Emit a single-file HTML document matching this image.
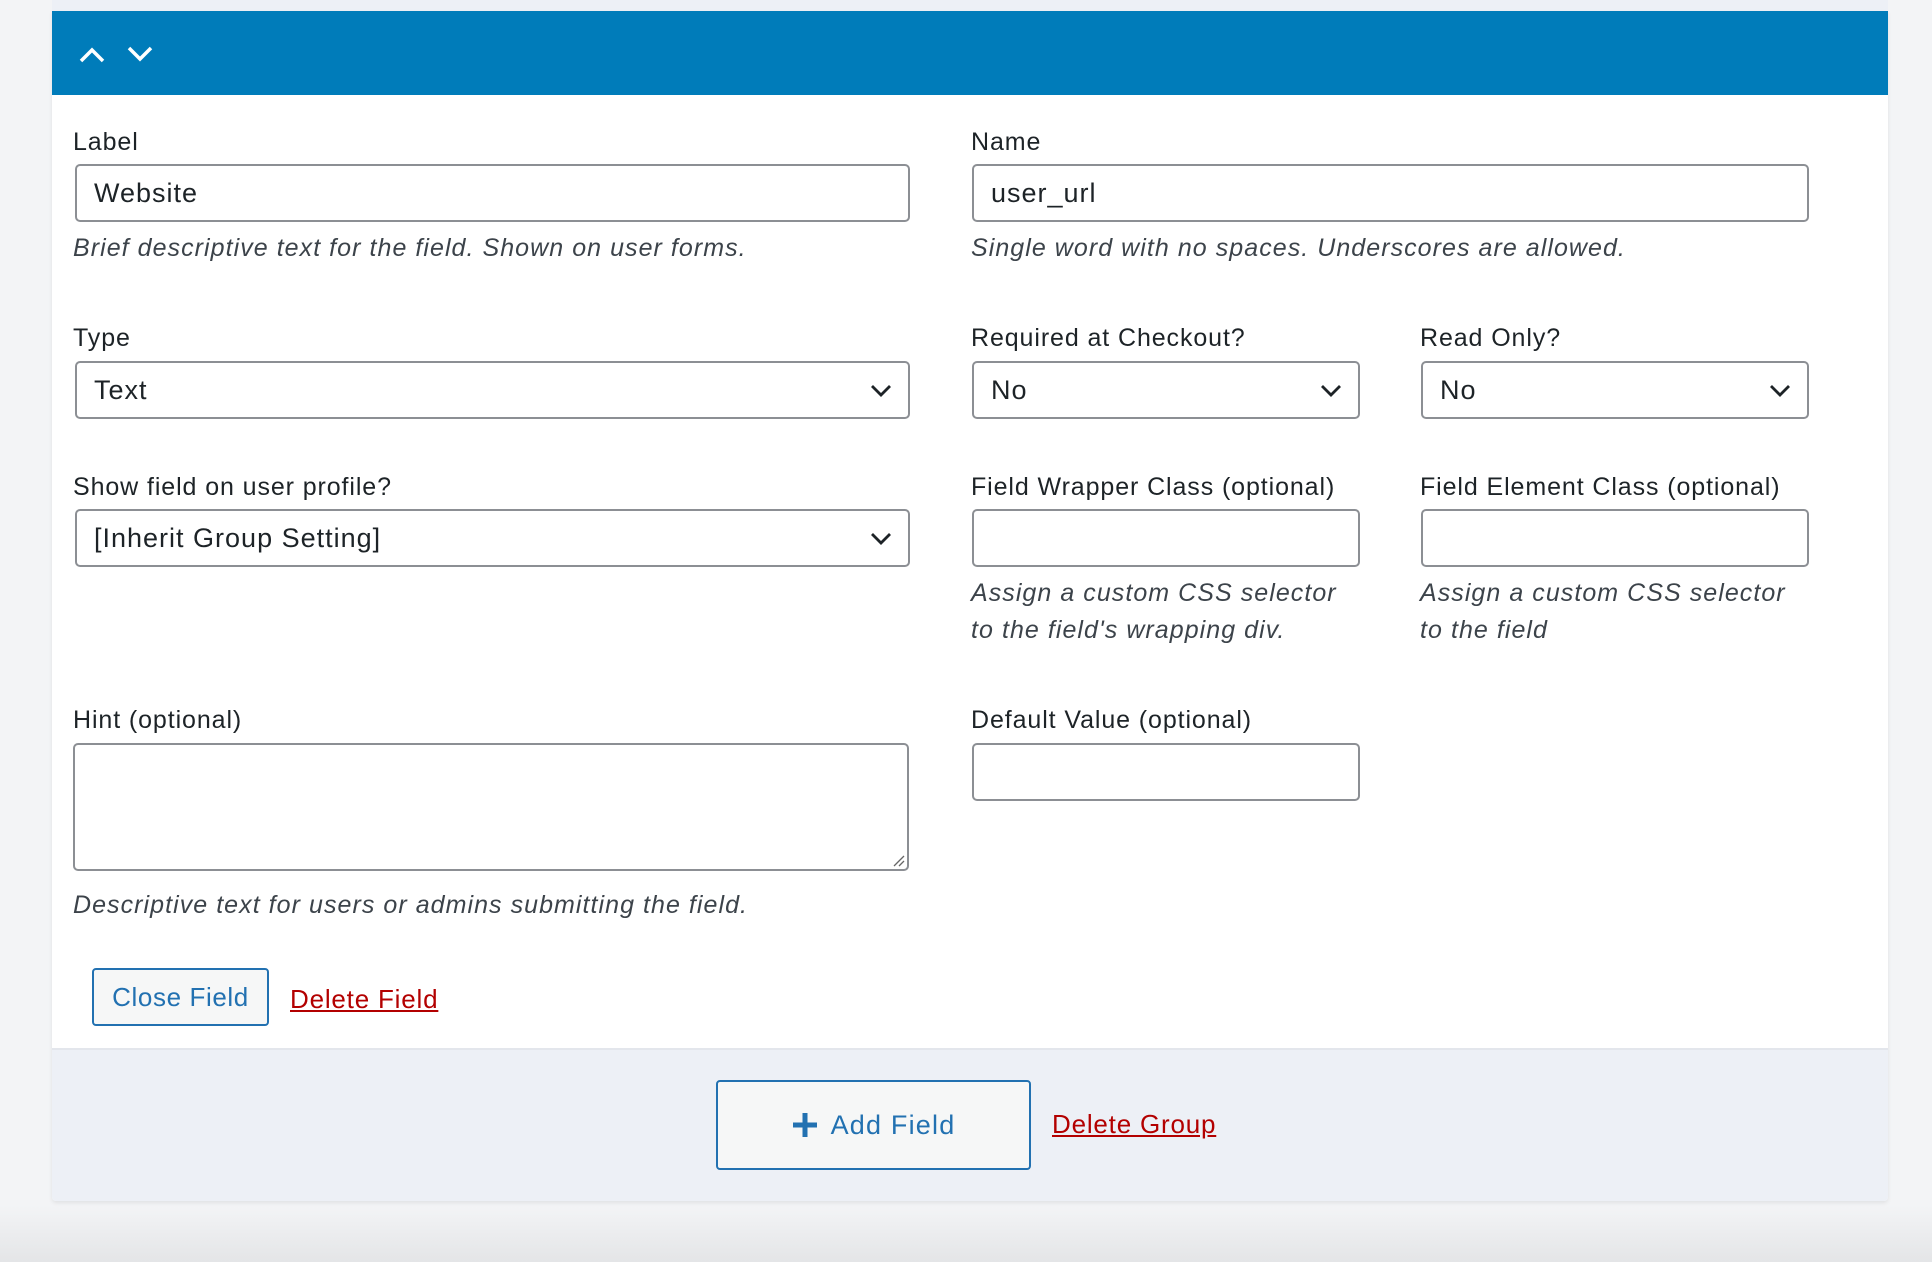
<!DOCTYPE html>
<html><head><meta charset="utf-8"><style>
*{box-sizing:border-box;margin:0;padding:0}
body{width:1932px;height:1262px;overflow:hidden;background:linear-gradient(#f3f4f6 0,#f3f4f6 1205px,#e4e5e7 1262px);font-family:"Liberation Sans",sans-serif;color:#1d2327;position:relative}
.top{position:absolute;left:52px;top:0;width:1836px;height:11px;background:#edf0f6}
.panel{position:absolute;left:52px;top:11px;width:1836px;height:1190px;background:#fff;box-shadow:0 2px 4px rgba(0,0,0,.08);border-radius:0 0 4px 4px;overflow:hidden}
.hdr{position:absolute;left:0;top:0;width:100%;height:84px;background:#007cba}
.foot{position:absolute;left:0;top:1037px;width:100%;height:153px;background:#edf0f6;border-top:2px solid #e3e6ec}
.a{position:absolute;font-size:25px;line-height:28px;letter-spacing:0.9px}
.lbl{color:#1d2327;margin-top:3px}
.help{font-style:italic;color:#3c434a;font-size:25px;letter-spacing:1.05px}
.in{position:absolute;border:2px solid #8c8f94;border-radius:5px;background:#fff;font-size:27px;letter-spacing:1px;padding-left:17px;display:flex;align-items:center;color:#1d2327}
.sel svg{position:absolute;right:16px;top:50%;margin-top:-6px}
.btn{position:absolute;border:2px solid #2271b1;border-radius:4px;background:#f6f7f7;color:#2271b1;display:flex;align-items:center;justify-content:center;font-size:26px;letter-spacing:0.6px}
.lnk{position:absolute;color:#b30000;text-decoration:underline;font-size:26px;line-height:28px;letter-spacing:0.8px}
</style></head><body>
<div class="top"></div>
<div class="panel">
<div class="hdr">
<svg style="position:absolute;left:27px;top:36px" width="26" height="16" viewBox="0 0 26 16"><path d="M2 14 L13 3 L24 14" fill="none" stroke="#fff" stroke-width="3.5"/></svg>
<svg style="position:absolute;left:75px;top:35px" width="26" height="16" viewBox="0 0 26 16"><path d="M2 2 L13 13 L24 2" fill="none" stroke="#fff" stroke-width="3.5"/></svg>
</div>
<div class="foot"></div>
</div>

<div class="a lbl" style="left:73px;top:125px">Label</div>
<div class="in" style="left:75px;top:164px;width:835px;height:58px">Website</div>
<div class="a help" style="left:73px;top:234px">Brief descriptive text for the field. Shown on user forms.</div>

<div class="a lbl" style="left:971px;top:125px">Name</div>
<div class="in" style="left:972px;top:164px;width:837px;height:58px">user_url</div>
<div class="a help" style="left:971px;top:234px">Single word with no spaces. Underscores are allowed.</div>

<div class="a lbl" style="left:73px;top:321px">Type</div>
<div class="in sel" style="left:75px;top:361px;width:835px;height:58px">Text<svg width="22" height="13" viewBox="0 0 22 13"><path d="M2 2 L11 11 L20 2" fill="none" stroke="#1d2327" stroke-width="2.8"/></svg></div>

<div class="a lbl" style="left:971px;top:321px">Required at Checkout?</div>
<div class="in sel" style="left:972px;top:361px;width:388px;height:58px">No<svg width="22" height="13" viewBox="0 0 22 13"><path d="M2 2 L11 11 L20 2" fill="none" stroke="#1d2327" stroke-width="2.8"/></svg></div>

<div class="a lbl" style="left:1420px;top:321px">Read Only?</div>
<div class="in sel" style="left:1421px;top:361px;width:388px;height:58px">No<svg width="22" height="13" viewBox="0 0 22 13"><path d="M2 2 L11 11 L20 2" fill="none" stroke="#1d2327" stroke-width="2.8"/></svg></div>

<div class="a lbl" style="left:73px;top:470px">Show field on user profile?</div>
<div class="in sel" style="left:75px;top:509px;width:835px;height:58px">[Inherit Group Setting]<svg width="22" height="13" viewBox="0 0 22 13"><path d="M2 2 L11 11 L20 2" fill="none" stroke="#1d2327" stroke-width="2.8"/></svg></div>

<div class="a lbl" style="left:971px;top:470px">Field Wrapper Class (optional)</div>
<div class="in" style="left:972px;top:509px;width:388px;height:58px"></div>
<div class="a help" style="left:971px;top:575px;line-height:37px">Assign a custom CSS selector<br>to the field's wrapping div.</div>

<div class="a lbl" style="left:1420px;top:470px">Field Element Class (optional)</div>
<div class="in" style="left:1421px;top:509px;width:388px;height:58px"></div>
<div class="a help" style="left:1420px;top:575px;line-height:37px">Assign a custom CSS selector<br>to the field</div>

<div class="a lbl" style="left:73px;top:703px">Hint (optional)</div>
<div class="in" style="left:73px;top:743px;width:836px;height:128px">
<svg style="position:absolute;right:2px;bottom:2px" width="14" height="14" viewBox="0 0 14 14"><path d="M13 3 L3 13 M13 8 L8 13" stroke="#666" stroke-width="1.3"/></svg></div>
<div class="a help" style="left:73px;top:891px">Descriptive text for users or admins submitting the field.</div>

<div class="a lbl" style="left:971px;top:703px">Default Value (optional)</div>
<div class="in" style="left:972px;top:743px;width:388px;height:58px"></div>

<div class="btn" style="left:92px;top:968px;width:177px;height:58px">Close Field</div>
<div class="lnk" style="left:290px;top:985px">Delete Field</div>

<div class="btn" style="left:716px;top:1080px;width:315px;height:90px;font-size:27px;letter-spacing:1.2px"><svg width="26" height="26" viewBox="0 0 26 26" style="margin-right:13px"><path d="M13 1 V25 M1 13 H25" stroke="#2271b1" stroke-width="5"/></svg>Add Field</div>
<div class="lnk" style="left:1052px;top:1110px">Delete Group</div>
</body></html>
